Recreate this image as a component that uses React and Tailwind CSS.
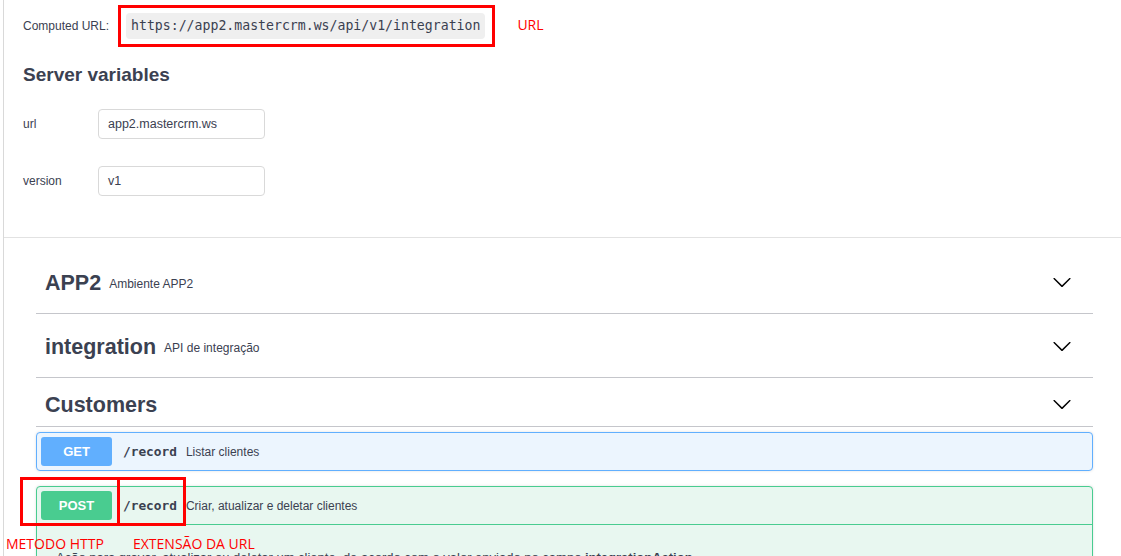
import React from "react";

// swagger-ui style collapse arrow
function Arrow() {
  return (
    <svg width="20" height="20" viewBox="0 0 20 20" className="shrink-0">
      <path
        fill="#000"
        d="M17.418 6.109c.272-.268.709-.268.979 0s.271.701 0 .969l-7.908 7.83c-.27.268-.707.268-.979 0l-7.908-7.83c-.27-.268-.27-.701 0-.969.271-.268.709-.268.979 0L10 13.25l7.418-7.141z"
      />
    </svg>
  );
}

function TagRow({ name, description, height, top }) {
  return (
    <div className={`flex items-center border-b border-[#c5c6cb] pl-[9px] pr-[21px] ${top} ${height}`}>
      <h3 className="text-[21.5px] font-bold leading-none text-[#3b4151]">{name}</h3>
      {description && <span className="ml-[8px] text-[12px] text-[#3b4151]">{description}</span>}
      <div className="ml-auto -mt-[3px]">
        <Arrow />
      </div>
    </div>
  );
}

function Operation({ method, path, summary, color, tint, children }) {
  return (
    <div className={`rounded-[4px] border shadow-[0_0_3px_rgba(0,0,0,0.12)] ${color} ${tint}`}>
      <div className="flex items-center p-[4px]">
        <span className={`flex h-[29px] w-[71px] items-center justify-center rounded-[3px] text-[13px] font-bold text-white ${method.bg}`}>
          {method.label}
        </span>
        <span className="ml-[11px] font-['DejaVu_Sans_Mono',monospace] text-[12.8px] font-bold text-[#3b4151]">{path}</span>
        <span className="ml-[9px] text-[12px] text-[#3b4151]">{summary}</span>
      </div>
      {children}
    </div>
  );
}

export default function App() {
  return (
    <div className="relative h-[556px] w-[1121px] overflow-hidden bg-white font-['Liberation_Sans',Arial,sans-serif] text-[#3b4151]">
      <div className="ml-[3px] h-full border-l border-[#d9d9d9]">
        {/* Servers */}
        <section className="h-[238px] border-b border-[#e2e2e2] pl-[19px] pt-[5px]">
          <div className="flex items-center">
            <span className="text-[12px]">Computed URL:</span>
            <div className="ml-[9px] border-[3px] border-[#ff0000] py-[5px] pl-[5px] pr-[7px]">
              <code className="flex h-[26px] items-center rounded-[4px] bg-[#efefef] px-[5px] font-['DejaVu_Sans_Mono',monospace] text-[13.2px] text-[#3b4151]">
                https://app2.mastercrm.ws/api/v1/integration
              </code>
            </div>
            <span className="ml-[22px] -mt-[3px] font-['Open_Sans',sans-serif] text-[14px] text-[#ff0000]">URL</span>
          </div>

          <h4 className="mt-[17px] text-[19px] font-bold leading-[22px]">Server variables</h4>

          <div className="mt-[23px] flex items-center">
            <span className="w-[75px] text-[12px]">url</span>
            <div className="flex h-[30px] w-[167px] items-center rounded-[4px] border border-[#d9d9d9] px-[9px] text-[12.5px]">
              app2.mastercrm.ws
            </div>
          </div>
          <div className="mt-[27px] flex items-center">
            <span className="w-[75px] text-[12px]">version</span>
            <div className="flex h-[30px] w-[167px] items-center rounded-[4px] border border-[#d9d9d9] px-[9px] text-[12.5px]">
              v1
            </div>
          </div>
        </section>

        {/* Tags */}
        <div className="ml-[32px] mt-[12px] w-[1057px]">
          <TagRow name="APP2" description="Ambiente APP2" height="h-[64px]" top="pt-[4px]" />
          <TagRow name="integration" description="API de integração" height="h-[64px]" top="pt-[4px]" />
          <TagRow name="Customers" height="h-[49px]" top="pt-[7px]" />

          <div className="mt-[5px] flex flex-col gap-[15px]">
            <Operation
              method={{ label: "GET", bg: "bg-[#61affe]" }}
              path="/record"
              summary="Listar clientes"
              color="border-[#61affe]"
              tint="bg-[#ecf5fe]"
            />
            <Operation
              method={{ label: "POST", bg: "bg-[#49cc90]" }}
              path="/record"
              summary="Criar, atualizar e deletar clientes"
              color="border-[#49cc90]"
              tint="bg-[#e8f7f0]"
            >
              <div className="border-t border-[#49cc90] pl-[19px] pt-[25px] text-[13px] leading-[16px]">
                Ação para gravar, atualizar ou deletar um cliente, de acordo com o valor enviado no campo <b>integrationAction</b>
              </div>
            </Operation>
          </div>
        </div>
      </div>

      {/* annotations */}
      <div className="absolute left-[20px] top-[477px] h-[49px] w-[100px] border-[3px] border-[#ff0000]" />
      <div className="absolute left-[117px] top-[477px] h-[49px] w-[69px] border-[3px] border-[#ff0000]" />
      <span className="absolute left-[6px] top-[535px] font-['Open_Sans',sans-serif] text-[14px] leading-[18px] text-[#ff0000]">METODO HTTP</span>
      <span className="absolute left-[133px] top-[535px] font-['Open_Sans',sans-serif] text-[14px] leading-[18px] text-[#ff0000]">EXTENSÃO DA URL</span>
    </div>
  );
}
